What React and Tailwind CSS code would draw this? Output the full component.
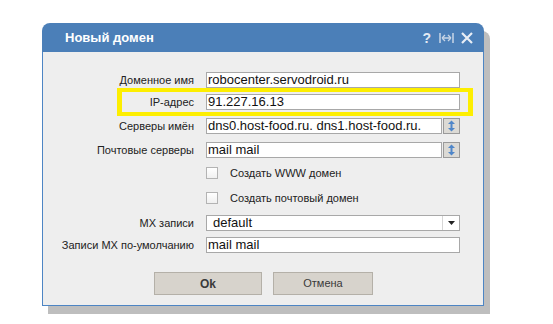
import React from 'react';

const font = { fontFamily: '"Liberation Sans", Arial, sans-serif' };

function Label({ children }) {
  return <div className="w-[151px] shrink-0 pr-0 text-right text-[11px] leading-4 text-[#222]">{children}</div>;
}

function TextField({ value }) {
  return (
    <div className="ml-3 h-4 w-[254px] border border-[#a8a8a8] bg-white pl-[1px] text-[13px] leading-[14px] text-[#111]">
      {value}
    </div>
  );
}

function Spinner() {
  return (
    <div className="flex h-4 w-[17px] shrink-0 items-center justify-center border border-[#9a9a9a] bg-[#dcdad5]">
      <svg width="9" height="12" viewBox="0 0 9 12">
        <path d="M4.5 0.5 L8 4 L1 4 Z" fill="#4f86c9" />
        <path d="M4.5 11.5 L8 8 L1 8 Z" fill="#4f86c9" />
        <rect x="3.5" y="3" width="2" height="6" fill="#4f86c9" />
      </svg>
    </div>
  );
}

function SpinField({ value }) {
  return (
    <div className="ml-3 flex w-[254px]">
      <div className="h-4 flex-1 border border-[#a8a8a8] bg-white pl-[1px] text-[13px] leading-[14px] text-[#111]">
        {value}
      </div>
      <div className="w-[1px]" />
      <Spinner />
    </div>
  );
}

function CheckRow({ children }) {
  return (
    <div className="flex h-4 items-center">
      <div className="w-[151px] shrink-0" />
      <div className="ml-3 h-3 w-3 border border-[#b3b3b3] bg-gradient-to-b from-white to-[#f0f0f0]" />
      <div className="ml-3 text-[11px] leading-4 text-[#222]">{children}</div>
    </div>
  );
}

export default function App() {
  return (
    <div className="h-[324px] w-[553px] bg-white pl-[42px] pt-[23px]" style={font}>
      <div className="w-[442px] rounded-t-[8px] shadow-[6px_8px_0_#bebebe]">
        {/* Title bar */}
        <div className="flex h-[29px] items-center rounded-t-[8px] bg-[#4b7fb8] pl-[23px] pr-[10px]">
          <div className="text-[13px] font-bold text-white">Новый домен</div>
          <div className="ml-auto flex items-center gap-[4px] text-[#e3eaf3]">
            <span className="text-[14px] font-bold leading-none">?</span>
            <svg width="15" height="12" viewBox="0 0 15 12" className="ml-[4px]">
              <path d="M1 1 V11 M14 1 V11" stroke="#c9d6e6" strokeWidth="1.5" fill="none" />
              <path d="M3 6 H12" stroke="#c9d6e6" strokeWidth="1.5" />
              <path d="M3 6 L6 3 M3 6 L6 9 M12 6 L9 3 M12 6 L9 9" stroke="#c9d6e6" strokeWidth="1.3" fill="none" />
            </svg>
            <svg width="14" height="14" viewBox="0 0 14 14" className="ml-[2px]">
              <path d="M2 2 L12 12 M12 2 L2 12" stroke="#e8eef5" strokeWidth="2.2" />
            </svg>
          </div>
        </div>

        {/* Body */}
        <div className="border-x border-b border-[#4d85c4] bg-[#eeeeee] pb-[10px] pt-[20px]">
          <div className="flex h-4 items-center">
            <Label>Доменное имя</Label>
            <TextField value="robocenter.servodroid.ru" />
          </div>

          <div className="relative mt-[6px] flex h-4 items-center">
            <Label>IP-адрес</Label>
            <TextField value="91.227.16.13" />
            <div className="pointer-events-none absolute left-[74px] top-[-6px] h-[28px] w-[356px] border-x-[5px] border-y-[4px] border-[#fdee00]" />
          </div>

          <div className="mt-2 flex h-4 items-center">
            <Label>Серверы имён</Label>
            <SpinField value="dns0.host-food.ru. dns1.host-food.ru." />
          </div>

          <div className="mt-2 flex h-4 items-center">
            <Label>Почтовые серверы</Label>
            <SpinField value="mail mail" />
          </div>

          <div className="mt-[7px]">
            <CheckRow>Создать WWW домен</CheckRow>
          </div>
          <div className="mt-[9px]">
            <CheckRow>Создать почтовый домен</CheckRow>
          </div>

          <div className="mt-[9px] flex h-4 items-center">
            <Label>MX записи</Label>
            <div className="ml-3 flex h-4 w-[254px] border border-[#a8a8a8] bg-white">
              <div className="flex-1 pl-[6px] text-[13px] leading-[14px] text-[#111]">default</div>
              <div className="flex w-[17px] items-center justify-center border-l border-[#d6d6d6]">
                <svg width="7" height="4" viewBox="0 0 7 4">
                  <path d="M0 0 H7 L3.5 4 Z" fill="#222" />
                </svg>
              </div>
            </div>
          </div>

          <div className="mt-[6px] flex h-4 items-center">
            <Label>Записи MX по-умолчанию</Label>
            <TextField value="mail mail" />
          </div>

          {/* Buttons */}
          <div className="mt-[19px] flex justify-center gap-[11px] pl-[1px]">
            <button className="h-[23px] w-[108px] border border-[#b4b0a8] bg-[#d7d3cc] text-[12px] font-bold text-[#3a3a3a]">
              Ok
            </button>
            <button className="h-[23px] w-[100px] border border-[#b4b0a8] bg-[#d7d3cc] text-[11px] text-[#3a3a3a]">
              Отмена
            </button>
          </div>
        </div>
      </div>
    </div>
  );
}
